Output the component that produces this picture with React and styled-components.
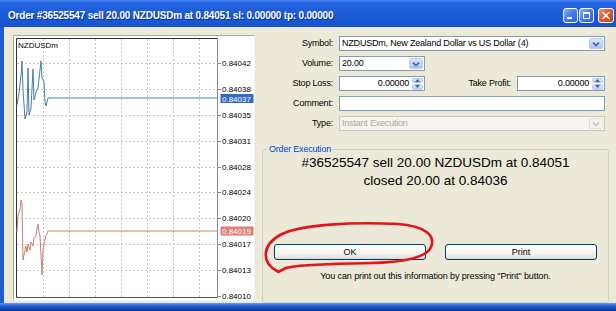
import React from 'react';
import styled, { createGlobalStyle } from 'styled-components';

const Global = createGlobalStyle`
  html, body { margin: 0; padding: 0; background: #ECE9D8; }
  body { font-family: "Liberation Sans", Arial, sans-serif; }
  #root { width: 616px; height: 311px; overflow: hidden; }
`;

const Window = styled.div`
  position: relative;
  width: 616px;
  height: 311px;
  display: flex;
  flex-direction: column;
  background: #ECE9D8;
  overflow: hidden;
`;

const TitleBar = styled.div`
  height: 27px;
  box-sizing: border-box;
  padding: 4px 2px 0 8px;
  display: flex;
  align-items: center;
  background: linear-gradient(180deg, #4a86f2 0%, #2565e2 10%, #1c5cd9 45%, #1856d2 85%, #1a4fc2 100%);
  color: #fff;
`;

const TitleText = styled.div`
  flex: 1;
  font-size: 10px;
  font-weight: bold;
  letter-spacing: -0.2px;
  white-space: nowrap;
  text-shadow: 1px 1px 0 #0a2f8f;
`;

const TitleButtons = styled.div`
  display: flex;
  align-items: center;
`;

const TitleButton = styled.div`
  width: ${p => (p.$close ? 16 : 15)}px;
  height: 15px;
  margin-left: ${p => (p.$close ? 4 : 1)}px;
  box-sizing: border-box;
  border: 1px solid #fff;
  border-radius: 3px;
  background: ${p =>
    p.$close
      ? 'linear-gradient(135deg, #f08a65 0%, #e25a30 45%, #c63d15 100%)'
      : 'linear-gradient(135deg, #8fb2fb 0%, #4a7ef0 45%, #2a60e0 100%)'};
  display: flex;
  align-items: center;
  justify-content: center;
  svg { display: block; }
`;

const Body = styled.div`
  flex: 1;
  display: flex;
  min-height: 0;
  border-left: 4px solid #1e5ad6;
`;

const FrameBottom = styled.div`
  height: 8px;
  background: linear-gradient(180deg, #6d9cf2 0%, #2e66da 30%, #1a4cc0 65%, #0b2c84 100%);
`;

const ChartFrame = styled.div`
  width: 242px;
  height: 266px;
  margin: 8px 0 0 9px;
  box-sizing: border-box;
  border: 1px solid;
  border-color: #a7a69c #f4f3ee #f4f3ee #a7a69c;
  background: #fff;
  flex-shrink: 0;
`;

const ChartSvg = styled.svg`
  display: block;
  font-family: "Liberation Sans", Arial, sans-serif;
`;

const RightPanel = styled.div`
  flex: 1;
  display: flex;
  flex-direction: column;
  padding: 9px 7px 0 0;
  min-width: 0;
`;

const Form = styled.div`
  display: flex;
  flex-direction: column;
  gap: 5px;
  padding-right: 4px;
`;

const FormRow = styled.div`
  display: grid;
  grid-template-columns: 78px 1fr;
  column-gap: 6px;
  height: 15px;
`;

const Label = styled.div`
  font-size: 9px;
  letter-spacing: -0.2px;
  line-height: 15px;
  text-align: right;
  color: #000;
  white-space: nowrap;
`;

const InlineLabel = styled(Label)`
  flex: 1;
  padding-right: 6px;
`;

const FieldLine = styled.div`
  display: flex;
  align-items: stretch;
  height: 15px;
`;

const Field = styled.div`
  display: flex;
  align-items: stretch;
  box-sizing: border-box;
  height: 15px;
  width: ${p => (p.$width ? `${p.$width}px` : '100%')};
  border: 1px solid ${p => (p.$disabled ? '#c9c7ba' : '#7f9db9')};
  background: ${p => (p.$disabled ? '#f5f4ef' : '#fff')};
  flex-shrink: 0;
`;

const FieldText = styled.div`
  flex: 1;
  font-size: 9px;
  letter-spacing: -0.2px;
  line-height: 13px;
  padding: 0 ${p => (p.$right ? 3 : 2)}px 0 2px;
  text-align: ${p => (p.$right ? 'right' : 'left')};
  color: ${p => (p.$disabled ? '#aca899' : '#000')};
  white-space: nowrap;
  overflow: hidden;
`;

const DropButton = styled.div`
  width: 14px;
  margin: 1px;
  box-sizing: border-box;
  border-radius: 2px;
  border: 1px solid ${p => (p.$disabled ? '#e2e0d6' : '#b9cbf3')};
  background: ${p =>
    p.$disabled
      ? '#f3f2ec'
      : 'linear-gradient(180deg, #dce6fd 0%, #c3d3fb 50%, #b1c6f6 100%)'};
  display: flex;
  align-items: center;
  justify-content: center;
  svg { display: block; }
`;

const SpinBox = styled.div`
  width: 11px;
  margin: 0 1px 0 0;
  display: flex;
  flex-direction: column;
  justify-content: center;
  gap: 1px;
`;

const SpinHalf = styled.div`
  height: 5.5px;
  border-radius: 1.5px;
  background: linear-gradient(180deg, #dbe5fc 0%, #bccff8 100%);
  border: 1px solid #b9cbf3;
  box-sizing: border-box;
  display: flex;
  align-items: center;
  justify-content: center;
  svg { display: block; }
`;

const GroupBox = styled.fieldset`
  margin: 12px 0 0 7px;
  padding: 0 0 20px;
  border: 1px solid #d0d0bf;
  border-radius: 3px;
  min-width: 0;
`;

const Legend = styled.legend`
  margin-left: 4px;
  padding: 0 2px;
  font-size: 9px;
  letter-spacing: -0.2px;
  line-height: 12px;
  color: #0046d5;
`;

const Message = styled.div`
  margin-top: -1px;
  font-size: 13.5px;
  line-height: 18px;
  text-align: center;
  color: #000;
`;

const ButtonRow = styled.div`
  display: flex;
  justify-content: center;
  gap: 19px;
  margin-top: 54px;
`;

const XPButton = styled.div`
  width: 152px;
  height: 16px;
  box-sizing: border-box;
  border: 1px solid #003c74;
  border-radius: 3px;
  background: linear-gradient(180deg, #ffffff 0%, #f4f3ee 60%, #e6e3da 90%, #d6d0c5 100%);
  font-size: 9px;
  line-height: 14px;
  text-align: center;
  color: #000;
`;

const Note = styled.div`
  margin-top: 10px;
  font-size: 9px;
  letter-spacing: -0.1px;
  line-height: 12px;
  text-align: center;
  color: #000;
`;

const Scribble = styled.svg`
  position: absolute;
  left: 258px;
  top: 218px;
  pointer-events: none;
`;

const Chevron = ({ disabled }) => (
  <svg width="8" height="6" viewBox="0 0 8 6">
    <polyline
      points="1,1.5 4,4.5 7,1.5"
      fill="none"
      stroke={disabled ? '#c9c7ba' : '#4d6185'}
      strokeWidth="1.6"
    />
  </svg>
);

const Combo = ({ text, width, disabled }) => (
  <Field $width={width} $disabled={disabled}>
    <FieldText $disabled={disabled}>{text}</FieldText>
    <DropButton $disabled={disabled}>
      <Chevron disabled={disabled} />
    </DropButton>
  </Field>
);

const Spinner = ({ text, width }) => (
  <Field $width={width}>
    <FieldText $right>{text}</FieldText>
    <SpinBox>
      <SpinHalf>
        <svg width="5" height="3" viewBox="0 0 5 3">
          <polygon points="0,3 2.5,0 5,3" fill="#4d6185" />
        </svg>
      </SpinHalf>
      <SpinHalf>
        <svg width="5" height="3" viewBox="0 0 5 3">
          <polygon points="0,0 2.5,3 5,0" fill="#4d6185" />
        </svg>
      </SpinHalf>
    </SpinBox>
  </Field>
);

const gridX = [1, 2, 3, 4, 5, 6, 7].map(i => 17 + 26 * i);
const levels = [
  '0.84042', '0.84038', '0.84035', '0.84031', '0.84028',
  '0.84024', '0.84020', '0.84017', '0.84013', '0.84010',
];
const gridY = levels.map((_, i) => 37.5 + 25.8 * (i + 1));

const bluePath =
  'M17,105 L19,93 L21,75 L22,61 L23,90 L25,119 L27,112 L28,68 L29,115 L31,108 L33,69 L34,100 L36,92 L38,88 L40,70 L41,61 L42,78 L44,82 L45,102 L46,106 L48,98 L217,98';
const redPath =
  'M17,232 L18,215 L20,210 L21,200 L22,203 L23,260 L25,250 L26,246 L27,252 L28,244 L30,250 L31,242 L33,246 L34,238 L36,236 L37,228 L38,224 L39,232 L40,236 L41,255 L42,275 L43,250 L44,244 L45,240 L46,236 L48,231 L217,231';

const Chart = () => (
  <ChartFrame>
    <ChartSvg width="240" height="264" viewBox="14 36 240 264">
      {gridX.map(x => (
        <line key={`v${x}`} x1={x + 0.5} y1="39" x2={x + 0.5} y2="297" stroke="#c8c8c8" strokeDasharray="2 2" />
      ))}
      {gridY.slice(0, 9).map(y => (
        <line key={`h${y}`} x1="17" y1={Math.round(y) + 0.5} x2="217" y2={Math.round(y) + 0.5} stroke="#c8c8c8" strokeDasharray="2 2" />
      ))}
      <path d="M16.5,297.5 L16.5,38.5 L217.5,38.5" fill="none" stroke="#303030" />
      <line x1="16.5" y1="297.5" x2="217.5" y2="297.5" stroke="#505050" />
      <line x1="217.5" y1="38.5" x2="217.5" y2="298" stroke="#8c8c8c" />
      {gridY.map(y => (
        <line key={`t${y}`} x1="218" y1={Math.round(y) + 0.5} x2="221" y2={Math.round(y) + 0.5} stroke="#808080" />
      ))}
      {levels.map((lv, i) => (
        <text key={lv} x="222" y={Math.round(gridY[i]) + 3} fontSize="8" fill="#000">{lv}</text>
      ))}
      <text x="18" y="48" fontSize="8" fill="#000">NZDUSDm</text>
      <path d={bluePath} fill="none" stroke="#4e7ea3" strokeWidth="1" />
      <path d={redPath} fill="none" stroke="#c98276" strokeWidth="1" />
      <rect x="220.5" y="94" width="33" height="9" fill="#316ac5" />
      <text x="222" y="101.5" fontSize="8" fill="#fff">0.84037</text>
      <rect x="220.5" y="226.5" width="33" height="9" fill="#e07d73" />
      <text x="222" y="234" fontSize="8" fill="#fff">0.84019</text>
    </ChartSvg>
  </ChartFrame>
);

export default function App() {
  return (
    <>
      <Global />
      <Window>
        <TitleBar>
          <TitleText>Order #36525547 sell 20.00 NZDUSDm at 0.84051 sl: 0.00000 tp: 0.00000</TitleText>
          <TitleButtons>
            <TitleButton>
              <svg width="13" height="13" viewBox="0 0 13 13">
                <rect x="3" y="8" width="5" height="2" fill="#fff" />
              </svg>
            </TitleButton>
            <TitleButton>
              <svg width="13" height="13" viewBox="0 0 13 13">
                <rect x="3.5" y="3.5" width="6" height="6" fill="none" stroke="#fff" />
                <rect x="3" y="3" width="7" height="2" fill="#fff" />
              </svg>
            </TitleButton>
            <TitleButton $close>
              <svg width="14" height="13" viewBox="0 0 14 13">
                <path d="M3.5,3 L10.5,10 M10.5,3 L3.5,10" stroke="#fff" strokeWidth="1.7" />
              </svg>
            </TitleButton>
          </TitleButtons>
        </TitleBar>
        <Body>
          <Chart />
          <RightPanel>
            <Form>
              <FormRow>
                <Label>Symbol:</Label>
                <Combo text="NZDUSDm, New Zealand Dollar vs US Dollar (4)" />
              </FormRow>
              <FormRow>
                <Label>Volume:</Label>
                <Combo text="20.00" width={86} />
              </FormRow>
              <FormRow>
                <Label>Stop Loss:</Label>
                <FieldLine>
                  <Spinner text="0.00000" width={86} />
                  <InlineLabel>Take Profit:</InlineLabel>
                  <Spinner text="0.00000" width={88} />
                </FieldLine>
              </FormRow>
              <FormRow>
                <Label>Comment:</Label>
                <Field />
              </FormRow>
              <FormRow>
                <Label>Type:</Label>
                <Combo text="Instant Execution" disabled />
              </FormRow>
            </Form>
            <GroupBox>
              <Legend>Order Execution</Legend>
              <Message>
                #36525547 sell 20.00 NZDUSDm at 0.84051
                <br />
                closed 20.00 at 0.84036
              </Message>
              <ButtonRow>
                <XPButton>OK</XPButton>
                <XPButton>Print</XPButton>
              </ButtonRow>
              <Note>You can print out this information by pressing "Print" button.</Note>
            </GroupBox>
          </RightPanel>
        </Body>
        <FrameBottom />
        <Scribble width="180" height="60" viewBox="258 218 180 60">
          <path
            d="M277,271 C262,263 261,246 280,235 C300,224 355,222 398,224 C424,226 436,235 431,247 C427,257 408,262 372,263 C338,264 300,264 286,268 L278,272"
            fill="none"
            stroke="#e3141c"
            strokeWidth="2.6"
            strokeLinecap="round"
            strokeLinejoin="round"
          />
        </Scribble>
      </Window>
    </>
  );
}
